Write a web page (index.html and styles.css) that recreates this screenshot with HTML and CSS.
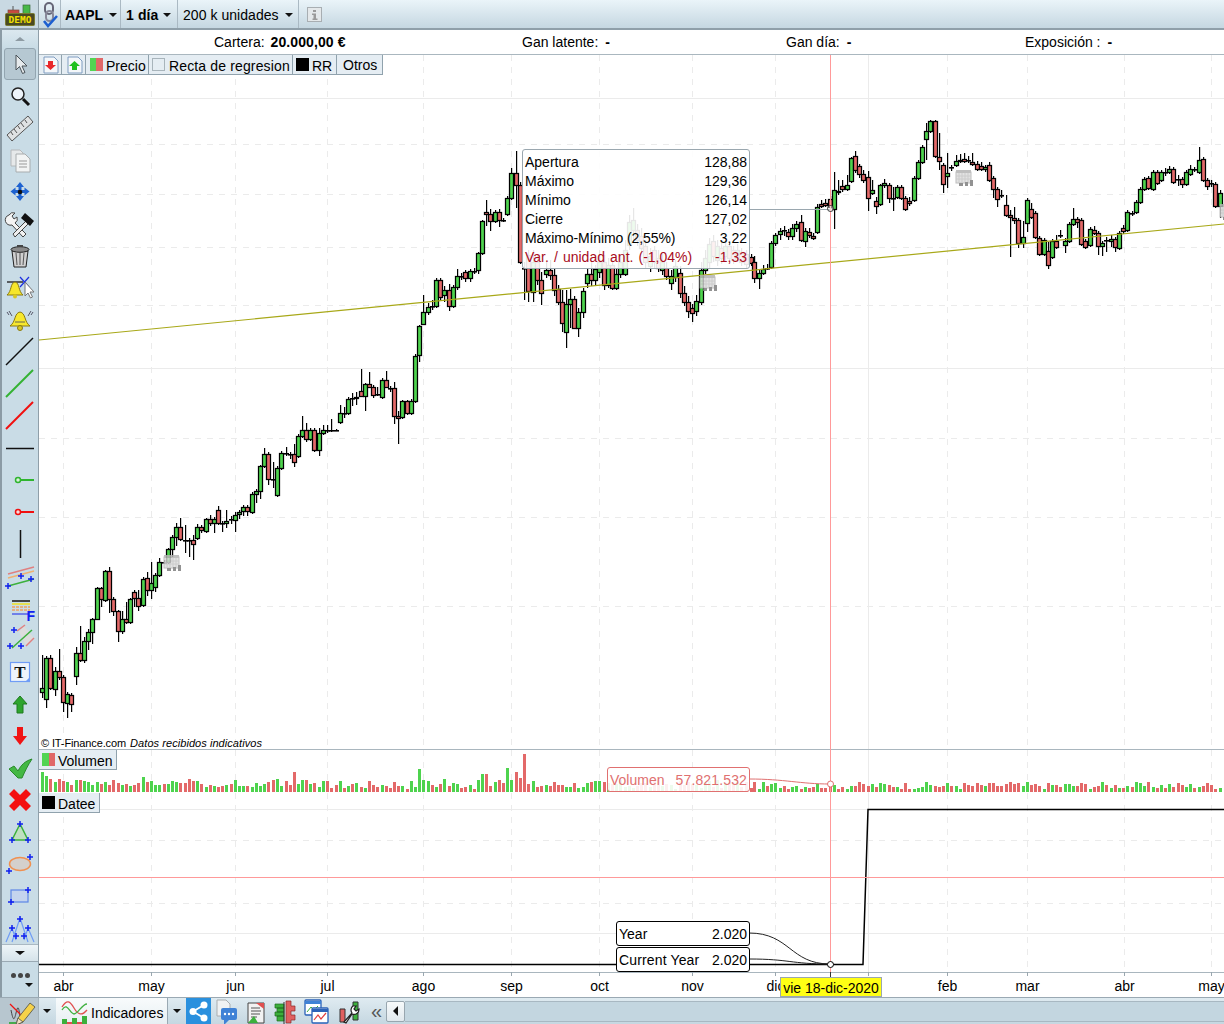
FILE: index.html
```html
<!DOCTYPE html>
<html lang="es">
<head>
<meta charset="utf-8">
<title>AAPL</title>
<link rel="stylesheet" href="styles.css">
</head>
<body>
<div class="app">
  <header class="topbar">
    <div class="tb-cell tb-logo">
      <svg width="30" height="22" viewBox="0 0 30 22"><rect x="3" y="6" width="11" height="4" fill="#c84a40" stroke="#7a4a40" stroke-width="0.700"/><line x1="8" y1="2" x2="8" y2="6" stroke="#555"/><rect x="18" y="1" width="7" height="9" fill="#48b848" stroke="#3a6a3a" stroke-width="0.700"/><rect x="0.500" y="9.500" width="29" height="12" rx="1" fill="#4a4a22" stroke="#7a7a30"/><text x="15" y="19" class="demo-text">DEMO</text></svg>
    </div>
    <div class="tb-cell tb-link">
      <svg width="18" height="28" viewBox="0 0 18 28"><rect x="4" y="2" width="8" height="11" rx="4" fill="none" stroke="#667" stroke-width="2"/><rect x="5" y="10" width="7" height="10" rx="3.500" fill="none" stroke="#889" stroke-width="2"/><path d="M3 20l4 5 9-10" fill="none" stroke="#1d5fd0" stroke-width="2.600"/></svg>
    </div>
    <div class="tb-cell tb-sym"><b>AAPL</b><i class="caret"></i></div>
    <div class="tb-cell tb-period"><b>1 día</b><i class="caret"></i></div>
    <div class="tb-cell tb-units"><span>200 k unidades</span><i class="caret"></i></div>
    <div class="tb-cell tb-info">
      <svg width="15" height="15" viewBox="0 0 15 15"><rect x="0.500" y="0.500" width="14" height="14" fill="#e4e8ea" stroke="#a8aeb2"/><rect x="6" y="3" width="3" height="2" fill="#9a9a9a"/><path d="M5 6.500h4v5h1.500v1.500h-5v-1.500h1v-3.500h-1.500z" fill="#9a9a9a"/></svg>
    </div>
  </header>

  <div class="main">
    <nav class="sidebar">
      <div class="side-scroll side-up"><i class="tri-up"></i></div>
      <div class="tool tool-on"><svg viewBox="0 0 32 32"><path d="M12 7v15l3.500-3.500 3 7 2.500-1-3-6.500h5z" fill="#e6eaec" stroke="#4a5258" stroke-width="1"/></svg></div>
      <div class="tool"><svg viewBox="0 0 32 32"><circle cx="14" cy="14" r="6" fill="#eef4fa" stroke="#222" stroke-width="1.500"/><path d="M19 19l6 6" stroke="#111" stroke-width="3"/></svg></div>
      <div class="tool"><svg viewBox="0 0 32 32"><path d="M3 23L24 4l5 6L8 29z" fill="#e0e2e3" stroke="#555"/><path d="M7 20l2 3M10 17l3 4M14 14l2 3M17 11l3 4M21 8l2 3" stroke="#555"/></svg></div>
      <div class="tool"><svg viewBox="0 0 32 32"><path d="M7 6h9l3 3v13H7z" fill="#e6e9ea" stroke="#b4b8ba"/><path d="M12 10h9l5 5v13H12z" fill="#f2f4f4" stroke="#a8acae"/><path d="M15 17h8M15 20h8M15 23h8" stroke="#999"/></svg></div>
      <div class="tool"><svg viewBox="0 0 32 32"><path d="M16 6l4 5h-2.500v3h3v-2.500l5 4-5 4V17h-3v3H20l-4 5-4-5h2.500v-3h-3v2.500l-5-4 5-4V14h3v-3H12z" fill="#1e62d0"/><circle cx="16" cy="16" r="2.300" fill="#111"/></svg></div>
      <div class="tool"><svg viewBox="0 0 32 32"><path d="M5 7a5 5 0 0 1 6-2l-3 3 2 3 3-2a5 5 0 0 1-2 6l11 11-3 3-11-12a5 5 0 0 1-3-10z" fill="#f4f4f4" stroke="#444"/><path d="M22 13L9 26l2 3 13-13z" fill="#eee" stroke="#444"/><path d="M21 5l9 8-4 5-9-8z" fill="#111"/></svg></div>
      <div class="tool"><svg viewBox="0 0 32 32"><path d="M8 11l2 16h12l2-16z" fill="#d0d0d0" stroke="#222"/><path d="M12 13l1 12M16 13v12M20 13l-1 12" stroke="#555"/><ellipse cx="16" cy="9.500" rx="9" ry="2.800" fill="#8a8a8a" stroke="#222"/><rect x="13" y="5" width="6" height="2" fill="#444"/></svg></div>
      <div class="tool"><svg viewBox="0 0 32 32"><path d="M3 10h16" stroke="#333" stroke-width="1.500"/><path d="M11 10c-5 1-3 9-8 13h16c-5-4-3-12-8-13z" fill="#f6e62c" stroke="#8a7a10"/><circle cx="11" cy="24.500" r="2" fill="#d8c820"/><path d="M16 5l9 10M25 5l-9 10" stroke="#1c2fe0" stroke-width="1.200"/><path d="M21 10v14l3-3 2.500 5 2-1-2.500-5h4z" fill="#fff" stroke="#777"/></svg></div>
      <div class="tool"><svg viewBox="0 0 32 32"><path d="M16 8c-6 1-4 10-10 14h20c-6-4-4-13-10-14z" fill="#f7e82e" stroke="#8a7a10"/><path d="M11 18h10" stroke="#665"/><circle cx="16" cy="24" r="2.500" fill="#d8c820" stroke="#8a7a10"/><path d="M5 7l3 5M27 7l-3 5M3 8l2 3M29 8l-2 3" stroke="#556"/></svg></div>
      <div class="tool"><svg viewBox="0 0 32 32"><path d="M2 29L29 2" stroke="#111" stroke-width="1.500"/></svg></div>
      <div class="tool"><svg viewBox="0 0 32 32"><path d="M2 29L29 2" stroke="#33b233" stroke-width="2"/></svg></div>
      <div class="tool"><svg viewBox="0 0 32 32"><path d="M2 29L29 2" stroke="#f01010" stroke-width="2"/></svg></div>
      <div class="tool"><svg viewBox="0 0 32 32"><path d="M2 16.500h28" stroke="#111" stroke-width="1.500"/></svg></div>
      <div class="tool"><svg viewBox="0 0 32 32"><path d="M14 16h16" stroke="#2fb52f" stroke-width="2"/><circle cx="14" cy="16" r="2.500" fill="#d8f0d8" stroke="#2fb52f" stroke-width="1.500"/></svg></div>
      <div class="tool"><svg viewBox="0 0 32 32"><path d="M14 16h16" stroke="#f01010" stroke-width="2"/><circle cx="14" cy="16" r="2.500" fill="#f8dada" stroke="#f01010" stroke-width="1.500"/></svg></div>
      <div class="tool"><svg viewBox="0 0 32 32"><path d="M16.500 2v28" stroke="#111" stroke-width="1.500"/></svg></div>
      <div class="tool"><svg viewBox="0 0 32 32"><path d="M4 14l26-7" stroke="#e08080" stroke-width="1.500"/><path d="M4 18l26-7" stroke="#f0b070" stroke-width="1.500"/><path d="M4 26l26-7" stroke="#3cb03c" stroke-width="1.500"/><path d="M1 26h6M4 23v6M24 19h6M27 16v6M14 16h6M17 13v6" stroke="#1020f0" stroke-width="1.500"/></svg></div>
      <div class="tool"><svg viewBox="0 0 32 32"><path d="M8 9h18" stroke="#444" stroke-width="2"/><path d="M8 12h18" stroke="#f0e020" stroke-width="1.500"/><path d="M8 15h18M8 18h18" stroke="#f0a060" stroke-width="1.500" stroke-dasharray="3 1"/><path d="M8 22h18" stroke="#7080e8" stroke-width="2"/><text x="31" y="29" class="tool-f">F</text></svg></div>
      <div class="tool"><svg viewBox="0 0 32 32"><path d="M15 8l5-6 10 12-8 8z" fill="#dcdcdc"/><path d="M13 7l8-6" stroke="#e08080" stroke-width="1.500"/><path d="M22 22l8-8" stroke="#e08080" stroke-width="1.500"/><path d="M8 24L28 6" stroke="#3cb03c" stroke-width="1.500"/><path d="M7 4h6M10 1v6M3 20h6M6 17v6M14 20h6M17 17v6" stroke="#1020f0" stroke-width="1.500" transform="translate(0 2)"/></svg></div>
      <div class="tool"><svg viewBox="0 0 32 32"><rect x="6.500" y="6.500" width="19" height="19" fill="#eef4fb" stroke="#6f9cf5" stroke-width="1.200"/><text x="16" y="22" class="tool-t">T</text><path d="M25 22l-3 3h3z" fill="#6f9cf5"/></svg></div>
      <div class="tool"><svg viewBox="0 0 32 32"><path d="M16 8l7 8h-4v9h-6v-9H9z" fill="#2ea52e" stroke="#1f7a1f"/></svg></div>
      <div class="tool"><svg viewBox="0 0 32 32"><path d="M13 7h6v9h4l-7 9-7-9h4z" fill="#f01414"/></svg></div>
      <div class="tool"><svg viewBox="0 0 32 32"><path d="M5 17l5-3 4 5c3-6 7-10 14-12-4 6-7 12-10 19h-4z" fill="#44b844" stroke="#2a8a2a"/></svg></div>
      <div class="tool"><svg viewBox="0 0 32 32"><path d="M10 5l6 6 6-6 5 5-6 6 6 6-5 5-6-6-6 6-5-5 6-6-6-6z" fill="#f41010"/></svg></div>
      <div class="tool"><svg viewBox="0 0 32 32"><path d="M16 8L8 24h16z" fill="#bfe0c0" stroke="#3cb03c" stroke-width="1.500"/><path d="M13 8h6M16 5v6M5 24h6M8 21v6M21 24h6M24 21v6" stroke="#1020f0" stroke-width="1.500"/></svg></div>
      <div class="tool"><svg viewBox="0 0 32 32"><ellipse cx="16" cy="16" rx="10.500" ry="6.500" fill="#d4d0cc" stroke="#f09050" stroke-width="1.500"/><path d="M23 9h6M26 6v6M2 23h6M5 20v6" stroke="#1020f0" stroke-width="1.500"/></svg></div>
      <div class="tool"><svg viewBox="0 0 32 32"><rect x="7" y="10" width="17" height="12" fill="#c4d4ee" stroke="#5d86e6" stroke-width="1.200"/><path d="M21 10h6M24 7v6M4 22h6M7 19v6" stroke="#1020f0" stroke-width="1.500"/></svg></div>
      <div class="tool"><svg viewBox="0 0 32 32"><path d="M2 30L8 16l4 12M8 30l8-24 8 24M20 28l4-12 6 14" fill="none" stroke="#6f9cf5" stroke-width="1.200"/><path d="M13 7h6M16 4v6M5 16h6M8 13v6M21 16h6M24 13v6M9 24h6M12 21v6M17 24h6M20 21v6" stroke="#1020f0" stroke-width="1.500"/></svg></div>
      <div class="side-scroll side-down"><i class="tri-down"></i></div>
      <div class="side-more"><span class="dot"></span><span class="dot"></span><span class="dot"></span><i class="more-caret"></i></div>
    </nav>

    <section class="content">
      <div class="infobar">
        <div>Cartera:<b class="val val-wide">20.000,00 €</b></div>
        <div>Gan latente:<b class="val">-</b></div>
        <div>Gan día:<b class="val">-</b></div>
        <div>Exposición :<b class="val">-</b></div>
      </div>
      <div class="charts">
        <div class="panel panel-price">
          <svg id="price" class="plot" viewBox="39 55 1185 694" width="1185" height="694"></svg>
          <div class="legend">
            <div class="lg-cell lg-ico"><svg width="18" height="18" viewBox="0 0 18 18"><path d="M2 1h10l4 4v12H2z" fill="#f4f7fa" stroke="#7f9cc0"/><path d="M6 5h5v4h3l-5.500 5L3 9h3z" fill="#e8282c"/></svg></div>
            <div class="lg-cell lg-ico lg-ico2"><svg width="18" height="18" viewBox="0 0 18 18"><path d="M2 1h10l4 4v12H2z" fill="#f4f7fa" stroke="#7f9cc0"/><path d="M6 14V10H3l5.500-5 5.500 5h-3v4z" fill="#1fc01f"/></svg></div>
            <div class="lg-cell lg-w1"><i class="sw sw-gr"></i><span>Precio</span></div>
            <div class="lg-cell lg-w2"><i class="sw sw-empty"></i><span class="wider">Recta de regresion</span></div>
            <div class="lg-cell lg-w3"><i class="sw sw-black"></i><span>RR</span></div>
            <div class="lg-cell lg-w4"><span>Otros</span></div>
          </div>
          <div class="copyright"><span class="copy-a">© IT-Finance.com</span> <em>Datos recibidos indicativos</em></div>
        </div>
        <div class="panel panel-vol">
          <svg id="vol" class="plot" viewBox="39 750 1185 43" width="1185" height="43"></svg>
          <div class="legend legend-sub"><div class="lg-cell lg-vol"><i class="sw sw-gr"></i><span>Volumen</span></div></div>
        </div>
        <div class="panel panel-date">
          <svg id="dat" class="plot" viewBox="39 793 1185 179" width="1185" height="179"></svg>
          <div class="legend legend-sub"><div class="lg-cell lg-dat"><i class="sw sw-black"></i><span>Datee</span></div></div>
        </div>
        <svg id="axis" class="axis" viewBox="39 972 1185 25" width="1185" height="25"></svg>

        <svg id="overlay" class="overlay" viewBox="39 55 1185 942" width="1185" height="942"></svg>
        <div class="tip tip-ohlc">
          <div class="tr"><span>Apertura</span><span>128,88</span></div>
          <div class="tr"><span>Máximo</span><span>129,36</span></div>
          <div class="tr"><span>Mínimo</span><span>126,14</span></div>
          <div class="tr"><span>Cierre</span><span>127,02</span></div>
          <div class="tr"><span class="tighter">Máximo-Mínimo (2,55%)</span><span>3,22</span></div>
          <div class="tr tr-red"><span class="spaced">Var. / unidad ant. (-1,04%)</span><span>-1,33</span></div>
        </div>
        <div class="tip tip-vol"><span>Volumen</span><span class="wider">57.821.532</span></div>
        <div class="tip tip-box tip-year"><span>Year</span><span>2.020</span></div>
        <div class="tip tip-box tip-cur"><span class="wider">Current Year</span><span>2.020</span></div>
        <div class="tip tip-date">vie 18-dic-2020</div>
      </div>
    </section>
  </div>

  <footer class="bottombar">
    <div class="bb-pencil"><svg width="30" height="27" viewBox="0 0 30 27"><path d="M5 12c2 10 3 12 5 3s3-6 4 6" fill="none" stroke="#444"/><path d="M4 6l14 14" stroke="#f01010" stroke-width="1.300"/><path d="M3 25h10" stroke="#22a022" stroke-width="1.500"/><path d="M24 5l5 4-12 15-7 3 2-7z" fill="#f6d24a" stroke="#665"/><path d="M10 27l2-7 5 4z" fill="#f0e0c0" stroke="#665"/></svg></div>
    <i class="caret bb-caret1"></i>
    <div class="bb-ind">
      <svg width="28" height="27" viewBox="0 0 28 27"><path d="M1 9c5-8 8-6 12 1s8 8 13 2" fill="none" stroke="#e05050" stroke-width="1.300"/><path d="M1 12c5-9 8 4 12 4s8-10 13-10" fill="none" stroke="#40b040" stroke-width="1.300"/><path d="M1 27v-6h5v3h5v-4h5v4h5v-6h5v9z" fill="#3cb03c"/><path d="M6 24h5v3H6zM16 24h5v3h-5z" fill="#e05050"/></svg>
      <span>Indicadores</span>
    </div>
    <i class="caret bb-caret2"></i>
    <div class="bb-share"><svg width="25" height="27" viewBox="0 0 25 27"><path d="M18 7L7 13.500 18 20" fill="none" stroke="#fff" stroke-width="1.800"/><circle cx="18" cy="7" r="3.500" fill="#fff"/><circle cx="7" cy="13.500" r="3.500" fill="#fff"/><circle cx="18" cy="20" r="3.500" fill="#fff"/></svg></div>
    <div class="bb-icons">
      <svg width="24" height="27" viewBox="0 0 24 27"><path d="M3 2h9l4 4v12H3z" fill="#f0f2f3" stroke="#a9adb0"/><rect x="7" y="10" width="16" height="12" rx="2" fill="#3f82d6"/><path d="M10 22v5l5-5z" fill="#3f82d6"/><circle cx="11" cy="16" r="1.200" fill="#fff"/><circle cx="15" cy="16" r="1.200" fill="#fff"/><circle cx="19" cy="16" r="1.200" fill="#fff"/></svg>
      <svg width="20" height="27" viewBox="0 0 20 27"><path d="M2 5h16v20H2z" fill="#f2f2f2" stroke="#444"/><path d="M10 5h8v6z" fill="#e05050"/><path d="M5 10h9M5 13h10M5 16h9M5 19h6" stroke="#555"/><path d="M2 25l6-7 4 7z" fill="#3cb03c"/></svg>
      <svg width="22" height="27" viewBox="0 0 22 27"><path d="M1 6h9v4H1zM1 14h9v4H1zM3 10h7v4H3zM3 18h7v5H3z" fill="#3cb03c" stroke="#1c6a1c" stroke-width="0.700"/><path d="M12 3h5v5h4v5h-4v4h4v5h-4v3h-5z" fill="#e06060" stroke="#8a2a2a" stroke-width="0.700"/><path d="M10 4v22" stroke="#333"/></svg>
      <svg width="25" height="27" viewBox="0 0 25 27"><rect x="1" y="2" width="16" height="15" rx="1" fill="#fff" stroke="#2a62b8" stroke-width="1.300"/><path d="M1 3h16v3H1z" fill="#3f82d6"/><path d="M3 14l4-5 3 3 4-4" fill="none" stroke="#3cb03c"/><rect x="8" y="10" width="16" height="15" rx="1" fill="#fff" stroke="#2a62b8" stroke-width="1.300"/><path d="M8 11h16v3H8z" fill="#2a62b8"/><path d="M10 22l4-5 3 4 5-6" fill="none" stroke="#e04040" stroke-width="1.200"/></svg>
      <svg width="24" height="27" viewBox="0 0 24 27"><path d="M3 11h5v13H3z" fill="#e06060" stroke="#333"/><path d="M16 4h5v18h-5z" fill="#3cb03c" stroke="#333"/><path d="M7 24l8-9a5 5 0 0 1 1-7l3 0-2 3 2 2 3-2a5 5 0 0 1-7 5l-6 9z" fill="#fff" stroke="#222" stroke-width="1.200"/></svg>
    </div>
    <div class="bb-chev">«</div>
    <div class="bb-scrollbtn"><i class="tri-left"></i></div>
    <div class="bb-track"></div>
  </footer>
</div>
<script src="chart.js"></script>
</body>
</html>
```

FILE: styles.css
```css
* { box-sizing: border-box; }
html, body { margin: 0; padding: 0; }
body {
  font-family: "Liberation Sans", Arial, sans-serif;
  font-size: 14px;
  color: #000;
  background: #fff;
}
.app { width: 1224px; height: 1024px; display: flex; flex-direction: column; overflow: hidden; }

/* top toolbar */
.topbar {
  height: 30px;
  flex: none;
  display: flex;
  background: linear-gradient(#eaf4f9, #c5d7e1);
  border-bottom: 2px solid #8f9fa9;
}
.tb-cell {
  height: 28px;
  display: flex;
  align-items: center;
  border-right: 1px solid #aab9c3;
  padding-top: 1px;
}
.tb-logo { width: 39px; padding-left: 5px; background: #c9d9e3; border-right-color: #8f9fa9; }
.demo-text { font: bold 9.500px "DejaVu Sans Mono", monospace; fill: #f2e000; text-anchor: middle; }
.tb-link { width: 22px; justify-content: center; }
.tb-sym { width: 60px; padding-left: 4px; }
.tb-period { width: 57px; padding-left: 5px; letter-spacing: 0.1px; }
.tb-units { width: 121px; padding-left: 5px; letter-spacing: 0.05px; }
.tb-info { border-right: 0; padding-left: 8px; }
.caret {
  display: inline-block;
  width: 0;
  height: 0;
  border-left: 4px solid transparent;
  border-right: 4px solid transparent;
  border-top: 4px solid #111;
}
.tb-sym .caret { margin-left: 6px; }
.tb-period .caret { margin-left: 5px; }
.tb-units .caret { margin-left: 6px; }

/* main */
.main { flex: 1; display: flex; min-height: 0; }
.sidebar {
  width: 39px;
  flex: none;
  background: #c9dce6;
  border-left: 2px solid #8b9ba5;
  border-right: 1px solid #8f9fa9;
  display: flex;
  flex-direction: column;
}
.side-scroll {
  height: 18px;
  flex: none;
  display: flex;
  align-items: center;
  justify-content: center;
}
.side-up { background: linear-gradient(#dbe8ef, #c9dce6); }
.side-down { background: linear-gradient(#eef5f8, #d6e3ea); border-top: 1px solid #aab9c3; border-bottom: 1px solid #9aa9b3; }
.tri-up { width: 0; height: 0; border-left: 5px solid transparent; border-right: 5px solid transparent; border-bottom: 4px solid #8e9ba3; }
.tri-down { width: 0; height: 0; border-left: 5px solid transparent; border-right: 5px solid transparent; border-top: 4px solid #111; }
.tool { width: 32px; height: 32px; flex: none; margin-left: 2px; }
.tool svg { display: block; width: 32px; height: 32px; }
.tool-on { background: #b6c8d2; border: 1px solid #93a5b0; border-radius: 3px; }
.tool-on svg { margin: -1px; }
.tool-f { font: bold 14px "Liberation Sans", sans-serif; fill: #1020f0; text-anchor: end; }
.tool-t { font: bold 17px "Liberation Serif", serif; fill: #111; text-anchor: middle; }
.side-more {
  flex: 1;
  position: relative;
  display: flex;
  justify-content: center;
  gap: 2px;
  padding-top: 11px;
}
.dot { width: 5px; height: 5px; border-radius: 50%; background: #444; }
.more-caret {
  position: absolute;
  left: 23px;
  top: 21px;
  width: 0;
  height: 0;
  border-left: 4px solid transparent;
  border-right: 4px solid transparent;
  border-top: 4px solid #111;
}

/* content */
.content { flex: 1; display: flex; flex-direction: column; min-width: 0; }
.infobar {
  height: 25px;
  flex: none;
  display: grid;
  grid-template-columns: 308px 264px 239px 1fr;
  padding-left: 175px;
  align-items: center;
  border-bottom: 1px solid #aab7bf;
  background: #fff;
  white-space: nowrap;
}
.val { margin-left: 7px; }
.val-wide { margin-left: 6px; letter-spacing: 0.1px; }
.charts { position: relative; flex: 1; background: #fff; }
.panel { position: relative; }
.plot, .axis { display: block; }
.panel-price { height: 695px; border-bottom: 1px solid #a9b6be; }
.panel-vol { height: 43px; }
.panel-date { height: 179px; }
.axis-lab { font: 14px "Liberation Sans", sans-serif; fill: #000; text-anchor: middle; }
.legend { position: absolute; left: 0; top: 0; display: flex; }
.lg-cell {
  height: 20px;
  display: flex;
  align-items: center;
  background: #e5edf3;
  border-right: 1px solid #90a2ad;
  border-bottom: 1px solid #90a2ad;
  white-space: nowrap;
}
.lg-cell span { padding-top: 2px; }
.lg-ico { width: 23px; padding-left: 3px; }
.lg-ico2 { width: 24px; padding-left: 4px; }
.lg-w1 { width: 63px; padding-left: 4px; }
.lg-w2 { width: 144px; padding-left: 3px; }
.lg-w3 { width: 44px; padding-left: 3px; }
.lg-w4 { width: 46px; padding-left: 6px; }
.lg-w4 span { padding-top: 0; }
.lg-vol { width: 78px; padding-left: 3px; }
.lg-dat { width: 61px; padding-left: 3px; }
.sw { display: block; width: 13px; height: 13px; margin-right: 3px; flex: none; }
.lg-w2 .sw { margin-right: 4px; }
.sw-gr { background: linear-gradient(90deg, #52d452 50%, #e06868 50%); }
.sw-empty { background: #e5edf3; border: 1px solid #a8b4bb; }
.sw-black { background: #000; }
.wider { letter-spacing: 0.14px; }
.tighter { letter-spacing: -0.1px; }
.spaced { word-spacing: 1.2px; }
.copyright { position: absolute; left: 2px; top: 682px; font-size: 11px; white-space: nowrap; }
.copy-a { letter-spacing: -0.12px; }
.copyright em { font-style: italic; letter-spacing: 0.06px; margin-left: 1px; }

/* overlays */
.overlay { position: absolute; left: 0; top: 0; pointer-events: none; }
.tip {
  position: absolute;
  background: rgba(255, 255, 255, 0.9);
  border-radius: 3px;
  white-space: nowrap;
}
.tip-ohlc {
  left: 483px;
  top: 94px;
  width: 228px;
  height: 120px;
  padding: 3px 2px;
  border: 1px solid #9aa7af;
}
.tr { display: flex; justify-content: space-between; height: 19px; line-height: 19px; }
.tr-red { color: #a80c1c; }
.tip-vol {
  left: 568px;
  top: 712px;
  width: 143px;
  height: 25px;
  padding: 0 2px;
  border: 1px solid #e07070;
  color: #e07070;
  display: flex;
  justify-content: space-between;
  align-items: center;
}
.tip-box {
  left: 577px;
  width: 134px;
  height: 25px;
  padding: 0 2px;
  background: #fff;
  border: 1px solid #000;
  display: flex;
  justify-content: space-between;
  align-items: center;
}
.tip-year { top: 866px; }
.tip-cur { top: 892px; }
.tip-date {
  left: 741px;
  top: 922px;
  width: 102px;
  height: 20px;
  line-height: 20px;
  text-align: center;
  background: #ffff14;
  border: 1px solid #9aa7af;
  border-radius: 0;
}

/* bottom bar */
.bottombar {
  height: 27px;
  flex: none;
  display: flex;
  align-items: center;
  background: linear-gradient(#dfebf1, #c5d7e1);
  border-top: 1px solid #9aa9b3;
}
.bb-pencil { width: 39px; height: 26px; background: #b7c6cf; padding-left: 6px; border-right: 1px solid #a6b4bc; overflow: hidden; }
.bb-pencil svg { display: block; }
.bb-caret1 { margin-left: 4px; }
.bb-ind {
  margin-left: 5px;
  width: 112px;
  height: 26px;
  display: flex;
  align-items: center;
  gap: 2px;
  padding-left: 5px;
  background: linear-gradient(#f8fbfc, #e8eff3);
  border-right: 1px solid #9aa9b3;
}
.bb-ind span { padding-top: 3px; }
.bb-ind svg { display: block; flex: none; }
.bb-caret2 { margin-left: 5px; }
.bb-share { margin-left: 5px; width: 25px; height: 26px; background: #2a90de; }
.bb-share svg { display: block; }
.bb-icons { margin-left: 3px; display: flex; gap: 8px; align-items: center; width: 156px; }
.bb-icons svg { display: block; flex: none; }
.bb-chev { width: 15px; font-size: 20px; line-height: 22px; color: #555; text-align: center; margin-left: -1px; }
.bb-scrollbtn {
  margin-left: 2px;
  width: 19px;
  height: 21px;
  background: linear-gradient(#f7fafb, #e0e8ed);
  border: 1px solid #98a6af;
  border-radius: 2px;
  display: flex;
  align-items: center;
  justify-content: center;
}
.tri-left { width: 0; height: 0; border-top: 5px solid transparent; border-bottom: 5px solid transparent; border-right: 5px solid #111; }
.bb-track { flex: 1; height: 21px; background: #c3d6e0; border-top: 1px solid #a8b8c2; border-bottom: 1px solid #a8b8c2; }
```

FILE: chart.js
```js
// [x, kind, top, bottom, high, low]  kind: 1 green, 0 red, 2 doji
var C = [
[42,1,688,692,655,698],[46,1,658,699,656,708],[50,0,658,688,655,690],[55,1,671,689,667,696],[59,0,671,677,649,680],[63,0,677,702,675,712],[67,1,694,703,692,718],[71,0,695,704,693,712],
[76,1,653,676,647,685],[80,0,653,660,626,662],[84,1,641,660,637,663],[88,1,632,641,629,650],[92,1,619,632,618,644],[97,1,588,619,587,620],[101,0,588,599,587,607],[105,1,571,600,570,602],[109,0,571,599,567,613],[113,0,599,611,597,616],
[118,0,611,631,610,642],[122,1,619,631,611,634],[126,0,619,622,602,624],[130,1,599,622,598,624],[134,0,592,598,590,607],[138,0,598,606,590,611],[143,1,579,605,577,607],[147,0,578,590,572,596],[151,1,583,590,562,599],[155,1,575,587,573,592],[159,1,562,575,558,577],[164,2,562,562,560,564],[168,1,549,562,548,564],
[172,1,537,549,535,557],[176,1,527,537,523,546],[180,0,527,539,518,541],[185,2,540,540,525,553],[189,2,540,540,538,557],[193,0,540,544,535,560],[197,1,527,538,524,540],[201,0,527,530,525,533],[206,1,519,531,518,533],[210,0,519,523,515,526],[214,1,519,523,517,533],[218,0,510,523,506,525],[222,2,523,523,521,532],[226,1,521,523,510,528],[231,2,519,519,516,524],[235,1,515,520,512,532],[239,1,512,514,510,519],[243,1,507,511,505,516],[247,0,507,511,505,516],
[252,1,494,512,492,514],[256,1,491,494,489,503],[260,1,466,491,465,499],[264,1,454,466,448,468],[268,0,454,479,452,485],[273,2,479,479,462,488],[277,1,468,495,466,497],[281,1,453,468,451,470],[286,2,453,453,447,456],[290,2,454,454,452,459],[294,0,454,462,444,467],[298,1,436,456,434,458],[302,1,430,436,416,438],[306,0,430,439,423,442],[310,1,430,439,428,441],[314,0,430,450,428,452],[319,1,433,450,428,456],[323,1,430,433,425,435],[327,2,430,430,425,433],[331,2,430,430,419,432],[336,2,430,430,429,431],
[340,1,413,422,405,424],[344,2,413,413,407,418],[348,1,399,413,397,415],[352,2,398,398,393,406],[356,1,397,398,392,405],[361,0,391,396,369,397],[365,1,384,396,383,411],[369,0,384,387,372,388],[373,0,387,395,385,398],[377,2,394,394,387,396],[382,1,380,397,378,399],[386,0,380,387,371,388],[390,2,388,388,386,392],[394,0,388,416,382,424],[398,0,416,418,411,444],[402,1,401,417,400,419],[407,0,401,413,400,415],[411,1,401,413,399,415],[415,1,356,401,354,403],[419,1,326,355,325,362],[423,1,312,324,295,325],[428,1,307,312,303,315],[432,2,306,306,300,310],[436,1,280,306,278,308],[440,0,280,297,278,300],[444,1,290,295,286,302],[449,0,290,306,284,311],[453,1,287,306,285,308],[457,1,276,287,269,290],[461,2,276,276,273,280],[465,0,272,278,270,282],[470,1,271,278,269,282],[474,2,271,271,268,274],[478,1,253,270,252,274],[482,1,221,253,220,255],[486,0,212,214,200,226],[490,0,214,221,209,231],[495,1,212,221,210,223],[499,0,212,220,209,227],[503,2,220,220,218,222],[507,1,198,214,196,216],[511,1,173,198,168,200],[516,0,173,185,151,208],[520,0,185,262,182,264],
[524,2,268,268,262,300],[528,0,255,291,250,302],[533,1,262,292,250,302],[537,0,262,280,255,285],[541,0,280,293,272,305],[546,1,270,274,262,278],[550,0,270,275,260,280],[554,0,275,290,268,296],[558,0,289,302,285,305],[562,0,302,323,290,332],[566,1,304,332,290,348],[570,1,299,304,289,328],[574,0,299,328,296,329],[578,1,312,328,308,337],[583,1,291,312,288,318],[587,1,274,283,268,288],[591,0,274,280,262,286],[595,1,269,280,265,285],[599,1,262,272,250,278],[604,0,262,285,255,290],[608,1,265,285,258,288],[612,0,265,288,260,290],[616,1,274,288,268,290],[620,1,262,274,255,278],[625,1,250,274,240,276],[629,1,222,245,215,250],[633,1,220,230,208,240],[637,0,230,240,224,246],[641,0,236,248,228,252],[645,0,246,262,240,268],[650,1,256,266,248,272],[654,0,250,262,246,268],[658,0,258,268,250,272],[662,1,262,270,254,275],[666,0,268,276,262,280],[671,1,276,283,270,290],[675,1,266,277,260,282],[680,0,273,293,266,298],[684,0,293,302,286,306],[688,0,302,311,296,318],[692,0,308,313,304,322],[696,1,301,311,295,316],[701,1,270,302,262,305],[705,1,258,270,250,274],[709,1,244,262,238,268],[713,0,241,256,235,262],[717,1,246,260,240,266],[721,0,248,258,242,264],[725,1,246,256,240,262],[729,0,246,258,242,262],[733,0,250,260,246,264],[737,1,250,258,244,262],[741,0,252,262,248,266],[746,0,254,264,250,268],[751,0,257,263,254,266],[754,0,262,278,256,283],[759,1,273,278,270,289],[763,1,269,273,265,275],[767,2,268,268,264,270],[771,1,243,267,241,269],[775,1,235,243,233,246],[780,1,231,234,228,240],[784,2,230,230,226,236],[788,0,232,236,229,240],[792,1,228,236,224,240],[796,1,224,228,221,232],[801,0,222,240,215,242],[805,1,231,241,228,247],[809,0,232,235,228,238],[813,0,236,238,233,240],[817,1,207,232,204,234],[821,0,204,206,200,208],[825,0,203,205,199,207],[830,0,199,207,196,209],[834,1,190,209,172,229],[838,0,191,192,180,195],[842,0,186,189,180,192],
[847,1,185,189,175,191],[851,1,158,181,157,183],[855,0,156,170,151,173],[859,0,166,174,164,178],[863,0,174,180,170,183],[868,0,177,198,171,211],[872,1,190,193,180,195],[876,0,201,206,197,214],[880,1,185,204,184,206],[884,1,183,185,179,188],[889,0,185,198,183,203],[893,2,198,198,187,211],[897,1,187,197,185,199],[901,0,187,198,185,200],[905,0,198,209,196,211],[909,0,201,203,197,206],[914,1,178,200,176,202],[918,1,162,178,160,180],[922,1,147,162,145,164],[926,1,131,139,123,160],[930,1,121,131,120,133],[935,0,121,156,120,158],[939,0,157,161,133,170],[943,0,165,184,163,193],[947,1,173,176,153,188],[951,2,167,167,165,171],[956,1,161,165,155,167],[960,1,160,161,154,163],[964,0,159,161,153,163],[968,2,160,160,156,163],[972,0,162,164,153,166],[977,0,164,169,161,171],[981,0,166,169,162,171],[985,1,167,169,165,172],[989,0,165,180,162,182],[993,0,178,189,176,198],[997,0,189,199,187,207],[1001,2,195,195,190,198],[1006,0,205,215,195,217],[1010,0,215,217,210,257],[1014,0,218,220,207,224],[1018,0,220,243,218,248],[1023,1,237,243,221,248],[1027,1,200,223,198,232],[1031,0,209,217,203,219],[1035,0,213,237,211,239],[1039,0,238,254,236,256],[1044,1,240,254,238,256],[1048,0,251,265,242,269],[1052,1,241,257,239,259],[1056,0,241,247,235,249],[1060,2,235,235,230,238],[1065,1,241,245,238,253],[1069,1,224,241,222,243],[1073,1,219,224,208,226],[1077,0,219,222,217,228],[1081,0,220,244,218,246],[1085,0,241,247,239,249],[1090,1,229,245,227,247],[1094,0,230,233,226,235],[1098,0,233,246,231,255],[1102,1,243,246,241,256],[1106,2,240,240,237,252],[1111,1,239,241,235,247],[1115,0,239,247,237,252],[1119,1,233,248,231,250],[1123,0,228,231,225,234],[1127,1,212,230,210,232],[1132,2,213,213,211,216],[1136,1,202,212,200,214],[1140,1,189,202,187,204],[1144,1,179,189,177,191],[1148,0,178,188,176,190],[1153,1,172,189,170,191],[1157,0,172,183,170,185],[1161,1,172,180,170,182],[1165,2,172,172,168,176],[1169,1,169,172,166,174],[1173,0,169,182,167,184],[1178,2,179,179,175,186],[1182,0,179,184,177,188],[1186,1,172,184,170,186],[1190,1,169,174,165,176],[1194,2,169,169,167,172],[1199,1,160,172,147,174],[1203,0,159,180,157,182],[1207,0,180,186,178,190],[1211,2,183,183,180,187],[1215,0,184,206,182,208],[1220,1,193,206,190,218]
];

var GREEN = '#4ed34e', RED = '#e36969';

function candle(c) {
  var x = c[0], kind = c[1], t = c[2], b = c[3], h = c[4], l = c[5];
  var s = '<rect x="' + x + '" y="' + h + '" width="1.200" height="' + (l - h) + '" fill="#000"/>';
  if (kind === 2) {
    s += '<rect x="' + (x - 2) + '" y="' + t + '" width="5" height="1.600" fill="#000"/>';
  } else {
    s += '<rect x="' + (x - 1.5) + '" y="' + (t + 0.5) + '" width="4" height="' + (b - t) + '" fill="' + (kind ? GREEN : RED) + '" stroke="#000" stroke-width="1.250"/>';
  }
  return s;
}

function hline(y, x1, x2, dash) {
  return '<line x1="' + x1 + '" x2="' + x2 + '" y1="' + y + '" y2="' + y + '" stroke="#ebebeb" stroke-width="1"' + (dash ? ' stroke-dasharray="6 6"' : '') + '/>';
}
function vline(x, y1, y2, dash) {
  return '<line x1="' + x + '" x2="' + x + '" y1="' + y1 + '" y2="' + y2 + '" stroke="#ebebeb" stroke-width="1"' + (dash ? ' stroke-dasharray="6 6"' : '') + '/>';
}

var months = [[63.5, 'abr'], [151.5, 'may'], [235.5, 'jun'], [327.5, 'jul'], [423.5, 'ago'], [511.5, 'sep'], [599.5, 'oct'], [692.5, 'nov'], [775.5, 'dic'], [868.5, ''], [947.5, 'feb'], [1027.5, 'mar'], [1124.5, 'abr'], [1211.5, 'may']];

function grid(y1, y2, hs) {
  var s = '';
  hs.forEach(function (h) { s += hline(h[0] + 0.5, 39, 1224, h[1]); });
  months.forEach(function (m) { s += vline(m[0], y1, y2, m[0] !== 868.5); });
  return s;
}

function calendar(x, y) {
  var s = '<g opacity="0.85"><rect x="' + x + '" y="' + (y + 2) + '" width="15" height="11" fill="#dedede" stroke="#b4b4b4"/><rect x="' + x + '" y="' + y + '" width="15" height="3" fill="#b4b4b4"/>';
  for (var i = 1; i < 5; i++) s += '<path d="M' + (x + i * 3) + ' ' + (y + 3) + 'v10" stroke="#c4c4c4"/>';
  s += '<path d="M' + x + ' ' + (y + 6) + 'h15M' + x + ' ' + (y + 9) + 'h15" stroke="#c4c4c4"/>';
  s += '<rect x="' + (x + 3) + '" y="' + (y + 13) + '" width="4" height="3" fill="#808080"/><rect x="' + (x + 9) + '" y="' + (y + 12) + '" width="3" height="4" fill="#808080"/><rect x="' + (x + 14) + '" y="' + (y + 10) + '" width="3" height="6" fill="#808080"/></g>';
  return s;
}

// price panel
var p = grid(55, 749, [[98, false], [144, true], [194, true], [247, true], [305, true], [368, false], [438, true], [517, true], [606, true]]);
C.forEach(function (c) { p += candle(c); });
p += '<line x1="39" y1="340" x2="1224" y2="224" stroke="#a8a818" stroke-width="1.200"/>';
p += calendar(164, 555) + calendar(956, 170) + calendar(700, 275) + calendar(1220, 204);
document.getElementById('price').innerHTML = p;

// volume panel
var firstVols = [20, 16, 13, 10, 13, 11, 10, 7, 12, 12, 11, 10, 7, 10, 8, 10, 7, 12, 9, 7, 8, 6, 7, 9, 15, 10, 11, 7, 7, 8, 8, 11, 10, 9, 9, 13, 11, 11, 8, 5, 7, 6, 5, 6, 7, 8, 12, 6, 6, 6, 5, 9, 6, 8, 10, 12, 13, 6, 11, 7, 20, 8, 12, 12, 8, 9, 5];
var spikes = { 419: 23, 423: 12, 438: 15, 444: 13, 482: 18, 486: 18, 507: 24, 511: 12, 516: 20, 520: 14, 524: 38, 499: 12, 495: 10, 794: 10, 866: 9, 1010: 10 };
var seed = 17;
function rnd() { seed = (seed * 9301 + 49297) % 233280; return seed / 233280; }
var v = grid(750, 793, []);
C.forEach(function (c, i) {
  var h = i < firstVols.length ? firstVols[i] : (spikes[c[0]] || Math.round(3 + rnd() * (c[0] > 750 ? 7 : 9)));
  v += '<rect x="' + (c[0] - 1) + '" y="' + (792 - h) + '" width="3" height="' + h + '" fill="' + (c[1] === 1 ? GREEN : RED) + '"/>';
});
document.getElementById('vol').innerHTML = v;

// date panel
var d = grid(793, 972, [[809, false], [840, true], [903, true], [933, false]]);
d += '<path d="M39 964.500H863L868 809.500H1224" fill="none" stroke="#000" stroke-width="1.500"/>';
document.getElementById('dat').innerHTML = d;

// axis
var a = '<line x1="39" x2="1224" y1="972.500" y2="972.500" stroke="#a9b6be"/>';
months.forEach(function (m) {
  a += '<line x1="' + m[0] + '" x2="' + m[0] + '" y1="972" y2="976" stroke="#9aa7af"/>';
  if (m[1]) a += '<text class="axis-lab" x="' + m[0] + '" y="991">' + m[1] + '</text>';
});
document.getElementById('axis').innerHTML = a;

// crosshair and connectors
var o = '<path d="M830.500 55V972M39 877.500H1224" stroke="#f99" fill="none"/>';
o += '<path d="M749 209.500H830" stroke="#9aa7af" fill="none"/>';
o += '<circle cx="830.500" cy="208.500" r="3" fill="#fff" fill-opacity="0.5" stroke="#333"/>';
o += '<path d="M749 779C785 779 800 784 830 784" stroke="#e07070" fill="none"/>';
o += '<circle cx="830.500" cy="784" r="3" fill="#fff" stroke="#e07070"/>';
o += '<path d="M749 933C790 933 790 964 830 964M749 959C790 959 790 964 830 964" stroke="#222" fill="none"/>';
o += '<circle cx="830.500" cy="964.500" r="3" fill="#fff" stroke="#000"/>';
o += '<line x1="830.500" x2="830.500" y1="972" y2="977" stroke="#333"/>';
document.getElementById('overlay').innerHTML = o;
```
